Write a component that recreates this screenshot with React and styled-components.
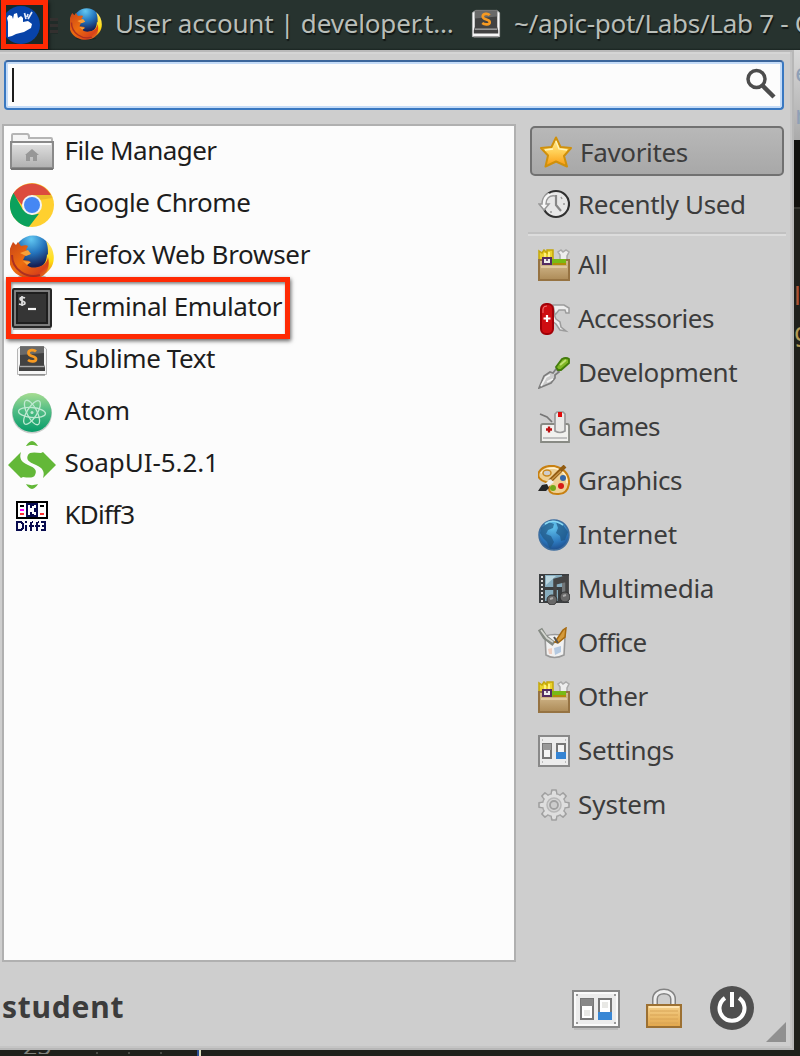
import React from "react";
import styled, { createGlobalStyle } from "styled-components";

const GlobalStyle = createGlobalStyle`
  * { box-sizing: border-box; }
  body { margin: 0; overflow: hidden; font-family: "Noto Sans", "Open Sans", sans-serif; font-size: 26px; }
  svg { display: block; flex: none; }
`;

const Desktop = styled.div`
  width: 800px;
  height: 1056px;
  overflow: hidden;
  display: flex;
  flex-direction: column;
  background: #1f201c;
`;

const Panel = styled.header`
  height: 50px;
  flex: none;
  display: flex;
  align-items: center;
  padding-bottom: 3px;
  background: linear-gradient(#27332f 0 48px, #1a2421 50px);
  color: #b9beb9;
  white-space: nowrap;
  overflow: hidden;
`;

const WhiskerButton = styled.div`
  width: 47px;
  height: 49px;
  margin-left: 1px;
  flex: none;
  align-self: flex-start;
  border: 5px solid #ff2a04;
  box-shadow: 1px 2px 4px rgba(0, 0, 0, 0.7);
  overflow: hidden;
`;

const Grip = styled.div`
  width: 8px;
  height: 16px;
  margin: 4px 12px 0 2px;
  flex: none;
  background: repeating-linear-gradient(#33302f 0 3px, #202b28 3px 6px);
`;

const TaskLabel = styled.span`
  width: ${(p) => p.$width}px;
  margin: 0 ${(p) => p.$after || 0}px 0 ${(p) => p.$before}px;
  padding-bottom: 2px;
  flex: none;
  letter-spacing: ${(p) => p.$track || 0}px;
  text-shadow: 1px 2px 1px rgba(0, 0, 0, 0.6);
`;

const Workspace = styled.div`
  height: 1000px;
  flex: none;
  display: flex;
`;

const Menu = styled.main`
  width: 794px;
  height: 1000px;
  flex: none;
  display: flex;
  flex-direction: column;
  background: #cecece;
  border-top: 2px solid #b9b9b9;
  border-right: 2px solid #b7b7b7;
  border-bottom: 2px solid #b7b7b7;
  box-shadow: inset -2px -2px #c5c5c5, inset 0 2px #d5d5d5;
`;

const SearchField = styled.div`
  width: 780px;
  height: 50px;
  margin: 8px 0 0 4px;
  padding: 0 6px 0 4px;
  flex: none;
  display: flex;
  align-items: center;
  justify-content: space-between;
  background: #fcfcfc;
  border: 2px solid #3978c1;
  border-top-color: #3b659b;
  border-radius: 4px;
  box-shadow: inset 0 0 0 2px #c5dcf8;

  svg { margin-bottom: 3px; }
`;

const Caret = styled.i`
  width: 2px;
  height: 34px;
  margin-left: 2px;
  background: #1c1c1c;
`;

const Columns = styled.div`
  height: 838px;
  margin-top: 14px;
  flex: none;
  display: flex;
`;

const AppList = styled.ul`
  list-style: none;
  margin: 0 0 0 2px;
  padding: 0;
  width: 514px;
  flex: none;
  background: #fcfcfc;
  border: 2px solid #b0b0b0;
`;

const AppRow = styled.li`
  height: 52px;
  display: flex;
  align-items: center;
  color: #1d1d1d;
`;

const IconSlot = styled.span`
  width: 48px;
  height: 48px;
  margin: 2px 8.5px 0 4px;
  flex: none;
  display: grid;
  place-items: center;
`;

const Label = styled.span`
  padding-bottom: ${(p) => p.$raise ?? 2}px;
  white-space: nowrap;
  letter-spacing: ${(p) => p.$track || 0}px;
`;

const Callout = styled.div`
  position: absolute;
  left: 6px;
  top: 277px;
  width: 284px;
  height: 62px;
  border: 5px solid #ff2a04;
  box-shadow: 1px 2px 4px rgba(0, 0, 0, 0.6), inset 1px 2px 3px rgba(0, 0, 0, 0.45);
`;

const Categories = styled.nav`
  width: 258px;
  margin-left: 12px;
  padding-top: 2px;
  color: #3c3c3c;
`;

const Category = styled.div`
  height: ${(p) => (p.$compact ? 53 : 54)}px;
  display: flex;
  align-items: center;
  padding: ${(p) => (p.$compact ? 2 : 0)}px 0 0 10px;
  gap: 8px;
`;

const Selected = styled(Category)`
  width: 254px;
  height: 50px;
  margin-left: 2px;
  background: linear-gradient(#b8b8b8, #a8a8a8);
  border: 2px solid #717171;
  border-radius: 5px;
  padding: 2px 0 0 8px;
`;

const Separator = styled.hr`
  margin: 3px 0 2px;
  border: 0;
  height: 4px;
  background: linear-gradient(#c1c1c1 50%, #dcdcdc 50%);
`;

const Footer = styled.footer`
  height: 84px;
  display: flex;
  align-items: flex-start;
  padding: 24px 6px 0 2px;
`;

const UserName = styled.strong`
  flex: 1;
  height: 42px;
  line-height: 42px;
  font-size: 30px;
  font-weight: 700;
  letter-spacing: 0.75px;
  color: #3c3c3c;
`;

const Behind = styled.aside`
  width: 6px;
  height: 1000px;
  display: flex;
  flex-direction: column;
  font-size: 26px;
  line-height: 30px;
  background: #1f201b;
`;

const BehindPage = styled.div`
  height: 90px;
  flex: none;
  overflow: hidden;
  padding: 1px 0 0 1px;
  line-height: 42px;
  color: #8fa0b6;
  background: linear-gradient(#d9d9d9, #aaa);
`;

const BehindTop = styled.div`
  height: 69px;
  flex: none;
  background: #11110d;
  border-bottom: 2px solid #35352f;
`;

const CodeSliver = styled.div`
  height: 36px;
  margin-top: ${(p) => p.$gap}px;
  flex: none;
  overflow: hidden;
  color: ${(p) => p.$tone};
`;

const Strip = styled.div`
  height: 6px;
  display: flex;
  align-items: flex-start;
  background: #1f201b;
`;

const LineNumber = styled.span`
  width: 30px;
  height: 4px;
  margin-left: 23px;
  overflow: hidden;
  font-size: 25px;
  color: #80827b;
  display: flex;
  align-items: flex-end;
  line-height: 18px;
`;

const Dot = styled.i`
  width: 2px;
  height: 2px;
  margin: 2px 0 0 ${(p) => p.$gap}px;
  background: #4a4b45;
`;

const CodeCursor = styled.i`
  width: 4px;
  height: 6px;
  margin-left: 35px;
  background: linear-gradient(90deg, #294b94 0 2px, #d9dbb9 2px);
`;

function Mouse() {
  return (
    <svg width="37" height="39" viewBox="6 5 37 39">
      <rect x="5" y="5" width="40" height="40" fill="#1b2926" />
      <circle cx="21" cy="25" r="19" fill="#0743a8" />
      <path d="M8 37V22l-1-4 2-3 3 1 1 3 1-5 3-1 1 5 3-2 2 2v4l5-1 4 3-1 4-7 4-8 2-4 2z" fill="#fff" />
      <path d="M24.500 13l1.500 6M32 12l-4 7M28 14l-1 3" stroke="#e4eafa" strokeWidth="1.700" />
    </svg>
  );
}

function Firefox({ size, id }) {
  return (
    <svg width={size} height={size} viewBox="0 0 44 44">
      <defs>
        <radialGradient id={id + "b"} cx=".45" cy=".1" r=".85">
          <stop offset="0" stopColor="#62c8f2" /><stop offset=".45" stopColor="#2474bd" /><stop offset=".85" stopColor="#172257" />
        </radialGradient>
        <linearGradient id={id + "o"} x1="0" y1="0" x2="1" y2="1">
          <stop offset="0" stopColor="#c84118" /><stop offset=".45" stopColor="#ed6d0f" /><stop offset=".8" stopColor="#d9421a" /><stop offset="1" stopColor="#ef9b20" />
        </linearGradient>
        <linearGradient id={id + "y"} x1="0" y1="0" x2="0" y2="1">
          <stop offset="0" stopColor="#ffe678" /><stop offset=".55" stopColor="#ffdd12" /><stop offset="1" stopColor="#e86817" />
        </linearGradient>
      </defs>
      <ellipse cx="22" cy="42" rx="14" ry="2" fill="#000" opacity=".25" />
      <circle cx="23" cy="19" r="18.5" fill={`url(#${id}b)`} />
      <path d="M36 6c9 7 10 21 4 28-9 12-29 11-35 1l18-2c9 1 14-5 14-14l1 1c0-6 0-9-2-14z" fill={`url(#${id}y)`} />
      <path d="M3 7l3 3 2-3 3 4c4-1 6-1 7 0l-2 4 3 3-4 3-2 4 7 1-3 4c3 3 7 3 11 2 5-1 9-4 10-10 2 8 0 14-4 18-9 7-26 4-32-6-5-9-4-18 1-27z" fill={`url(#${id}o)`} />
      <path d="M10 18l8-3 3 4-5 2zM13 26l8 1-4 3z" fill="#f7a039" />
      <path d="M2 20c0 15 15 24 28 20" fill="none" stroke="#ad3022" strokeWidth="2" />
    </svg>
  );
}

function Sublime({ size }) {
  return (
    <svg width={size} height={size} viewBox="0 0 32 32">
      <path d="M1.500 4v25.500h29V4l-3-2.500H5z" fill="#f6f6f6" stroke="#b5b5b5" strokeWidth="1" />
      <path d="M4 1.500h24V19l1 4v3H3v-3l1-4z" fill="#424242" />
      <path d="M4 1.500h24V8L4 10z" fill="#777" opacity=".75" />
      <path d="M4 21.500h24" stroke="#aaa" strokeWidth="1.400" />
      <path d="M20 6.500c-2-2-7.500-2-7.500 1.500 0 4 7.500 2.500 7.500 6 0 3-5.500 3-8 1" fill="none" stroke="#f79a22" strokeWidth="2.800" />
      <path d="M3 30h26" stroke="#777" strokeWidth="1.200" />
    </svg>
  );
}

function HomeFolder() {
  return (
    <svg width="44" height="44" viewBox="0 1 44 44">
      <defs><linearGradient id="folder" x2="0" y2="1"><stop stopColor="#e2e2e2" /><stop offset="1" stopColor="#b0b0b0" /></linearGradient></defs>
      <path d="M2 14V5q0-1 1-1h14q2 0 2 3v1h22q1 0 1 1v5" fill="#f5f5f5" stroke="#b5b5b5" strokeWidth="2" />
      <path d="M1 12h42v26H1z" fill="url(#folder)" stroke="#8a8a8a" strokeWidth="2" />
      <path d="M3 14h38" stroke="#fafafa" strokeWidth="2" />
      <path d="M1 39h42" stroke="#757575" strokeWidth="2" />
      <path d="M15 25l7-6 7 6h-2v6h-4v-4h-3v4h-4v-6z" fill="#979797" />
    </svg>
  );
}

function Chrome() {
  return (
    <svg width="44" height="44" viewBox="0 0 44 44">
      <circle cx="22" cy="22" r="22" fill="#ffd02f" />
      <path d="M3 11A22 22 0 0 1 41 12H22L12 22z" fill="#dc4b3e" />
      <path d="M3.500 10A22 22 0 0 0 19 43.800l10-13L22 32l-9-5z" fill="#0ba15d" />
      <path d="M22 12h19l1.500 3L29 17z" fill="#d7a62a" opacity=".5" />
      <circle cx="22" cy="22" r="10" fill="#f3f3f3" />
      <circle cx="22" cy="22" r="8" fill="#4587f3" />
    </svg>
  );
}

function Terminal() {
  return (
    <svg width="40" height="42" viewBox="0 0 40 42">
      <path d="M1 41h38" stroke="#aaa" strokeWidth="2" />
      <rect x="1" y="1" width="38" height="38" rx="1" fill="#555" stroke="#272727" strokeWidth="2" />
      <rect x="3" y="3" width="34" height="34" fill="none" stroke="#8a8a8a" strokeWidth="1.500" />
      <rect x="5" y="5" width="30" height="30" fill="#353535" stroke="#1e1e1e" strokeWidth="2" />
      <path d="M13 10c-2-1-5-1-5 1s5 2 5 4-3 2-6 1M10 8v10" fill="none" stroke="#ddd" strokeWidth="1.800" />
      <path d="M16 21h8" stroke="#f5f5f5" strokeWidth="2.200" />
    </svg>
  );
}

function Atom() {
  return (
    <svg width="42" height="42" viewBox="0 0 42 42">
      <defs><linearGradient id="atom" x2="0" y2="1"><stop stopColor="#a6dc91" /><stop offset=".45" stopColor="#51bd85" /><stop offset="1" stopColor="#079c68" /></linearGradient></defs>
      <circle cx="21" cy="21.500" r="20" fill="#c9cdca" />
      <circle cx="21" cy="20.500" r="19.500" fill="url(#atom)" />
      <g fill="none" stroke="#bfe9d2" strokeWidth="1.300">
        <ellipse cx="21" cy="20.500" rx="13.500" ry="5" transform="rotate(5 21 20.500)" />
        <ellipse cx="21" cy="20.500" rx="13.500" ry="5" transform="rotate(63 21 20.500)" />
        <ellipse cx="21" cy="20.500" rx="13.500" ry="5" transform="rotate(122 21 20.500)" />
      </g>
      <circle cx="21" cy="20.500" r="1.500" fill="#bfe9d2" />
    </svg>
  );
}

function SoapUI() {
  return (
    <svg width="48" height="48" viewBox="0 0 48 48">
      <g fill="#63b838">
        <path d="M18 5c1-2 4-5 6-5s5 3 6 5c-5-1.500-7-1.500-12 0zM18 43c5 1.500 7 1.500 12 0-1 2-4 5-6 5s-5-3-6-5z" />
        <path d="M0 24L13 11c-2 6 0 10 7 13 8 3 9 6 7 10-1 3-6 3-12 2l-2 1z" />
        <path d="M48 24L35 37c2-6 0-10-7-13-8-3-10-6-8-10 1-3 6-3 13-2l2-1z" />
      </g>
    </svg>
  );
}

function KDiff() {
  return (
    <svg width="32" height="32" viewBox="0 0 32 32" shapeRendering="crispEdges">
      <path d="M0 0h32v18H0z" fill="#000" />
      <path d="M2 2h8v14H2zM22 2h8v14h-8z" fill="#fff" />
      <path d="M10 2h12v14H10z" fill="#080b4e" />
      <path d="M13 4v10M19 4v2h-2v2h-2v2h2v2h2v2" fill="none" stroke="#fff" strokeWidth="2" />
      <path d="M4 5h4M24 5h4" stroke="#000" strokeWidth="2" />
      <path d="M4 9h4" stroke="#f0f" strokeWidth="2" />
      <path d="M4 13h4M24 13h4" stroke="#f33" strokeWidth="2" />
      <path d="M1 20v10M1 21h4l2 2v4l-2 2H1M10 20v2M10 24v6M15 30v-8l2-1M13 25h5M21 30v-8l2-1M19 25h5M25 21h4v8h-4M26 25h4" fill="none" stroke="#080b4e" strokeWidth="1.800" />
    </svg>
  );
}

const Small = ({ children }) => <svg width="32" height="32" viewBox="0 0 32 32">{children}</svg>;

function Star() {
  return (
    <Small>
      <defs><linearGradient id="star" x2="0" y2="1"><stop stopColor="#fff0a0" /><stop offset=".5" stopColor="#ffcf55" /><stop offset="1" stopColor="#fa9a0f" /></linearGradient></defs>
      <path d="M16 1.500l4.500 9.500 10.500 1-7 8 3 10.500-11-5-10.500 5 2.500-11L1 12l10.500-1z" fill="url(#star)" stroke="#d0900b" strokeWidth="2" strokeLinejoin="round" />
      <path d="M16 5l3 8 8 1M5 14l8-1" fill="none" stroke="#fff5bc" strokeWidth="1.300" />
    </Small>
  );
}

function Recent() {
  return (
    <Small>
      <circle cx="18" cy="16" r="13" fill="#e7e7e7" stroke="#303030" strokeWidth="2.200" />
      <path d="M18 7v10l5 6" fill="none" stroke="#888" strokeWidth="2.200" />
      <path d="M17 8c-6-1-9 3-9 8h3l-5 6-5-6h3c0-4 2-9 6-11" fill="#f8f8f8" stroke="#999" strokeWidth="1.500" />
      <path d="M23 9l1 2M27 16h-2M13 25v-2" stroke="#999" strokeWidth="1.500" />
    </Small>
  );
}

function Box({ id }) {
  return (
    <Small>
      <defs><linearGradient id={id} x2="0" y2="1"><stop stopColor="#d7be94" /><stop offset="1" stopColor="#ad8b57" /></linearGradient></defs>
      <path d="M1 11V2l3 2 2-3 3 3V1h6v10z" fill="#ead22e" stroke="#c4a70a" strokeWidth="1.500" />
      <path d="M7 4v6M11 3v7" stroke="#fff17a" strokeWidth="2" />
      <path d="M22 10V6l-2-3 3-2 2 2 3-2 3 2-2 4v4" fill="#eee" stroke="#aaa" strokeWidth="1.500" />
      <path d="M1 11h30v20H1z" fill={`url(#${id})`} stroke="#967342" strokeWidth="2" />
      <path d="M14 10h14v6H14z" fill="#78ba16" /><path d="M15 15h13" stroke="#b08e08" strokeWidth="2" />
      <path d="M5 9h8v6H5z" fill="#eee" stroke="#542c61" strokeWidth="2" /><path d="M9 9v3" stroke="#542c61" strokeWidth="1.500" />
      <path d="M3 18h26" stroke="#e7d2aa" strokeWidth="1.500" />
    </Small>
  );
}

function Knife() {
  return (
    <Small>
      <path d="M15 2h11l5 3v5h-3l-1-3h-6l-4 5zM15 9l3 7 4 3 1 5 5 4-6-1-4-6-4-3z" fill="#eee" stroke="#9c9c9c" strokeWidth="1.500" />
      <rect x="3" y="1" width="12" height="30" rx="5" fill="#cf0d12" stroke="#a00007" strokeWidth="2" />
      <path d="M5 10V6q0-3 4-3" stroke="#e77" fill="none" />
      <path d="M9 12v7M5.500 15.500h7" stroke="#fff" strokeWidth="2.200" />
    </Small>
  );
}

function Trowel() {
  return (
    <Small>
      <path d="M1 31l5-12 6-4 3 1 3-4 3 3-4 3v3l-4 5z" fill="#ccc" stroke="#7d7d7d" strokeWidth="1.700" />
      <path d="M3 29l5-9 4-2M9 25l6-3" fill="none" stroke="#f2f2f2" strokeWidth="1.600" />
      <path d="M18 10l6-8q4-2 7 0v4l-8 7h-3z" fill="#82b827" stroke="#437c0b" strokeWidth="1.800" />
      <path d="M22 8l6-5" stroke="#bfe072" strokeWidth="2" />
    </Small>
  );
}

function Joystick() {
  return (
    <Small>
      <path d="M2 3l7 3 5 5" fill="none" stroke="#777" strokeWidth="1.700" />
      <path d="M3 15q0-2 2-2h24q2 0 2 2v16H3z" fill="#f1f1ee" stroke="#888a84" strokeWidth="1.800" />
      <path d="M5 27h24" stroke="#bbb" strokeWidth="1.800" />
      <path d="M17 20V3l2-2h6l2 2v17q-5 3-10 0z" fill="#e9e9e7" stroke="#999" strokeWidth="1.700" />
      <path d="M20 1h4v5h-4z" fill="#e00b0b" /><path d="M11 15.500v6M8 18.500h6" stroke="#bc1111" strokeWidth="2.300" />
    </Small>
  );
}

function Palette() {
  return (
    <Small>
      <path d="M1 7q4-7 15-6 16 4 15 18-2 11-12 10-9 0-8-7 1-5-3-5-10-3-7-10z" fill="#eed094" stroke="#c88011" strokeWidth="2" />
      <path d="M3 8q4-5 13-5 13 3 13 15" fill="none" stroke="#fff0cc" strokeWidth="1.500" />
      <ellipse cx="9" cy="8" rx="4" ry="3" fill="#cecece" stroke="#ca891e" strokeWidth="1.500" />
      <path d="M27 1L12 16" stroke="#925c12" strokeWidth="4" /><path d="M23 6l-12 11" stroke="#c99545" strokeWidth="1.500" />
      <path d="M12 14l-5 5 3 3 6-5z" fill="#eee" /><path d="M0 26l4-6 5-1 2 4-3 3z" fill="#262626" />
      <circle cx="25" cy="13" r="3" fill="#3668a8" /><circle cx="15" cy="23" r="3" fill="#74a919" /><circle cx="23" cy="21" r="3" fill="#d81b17" />
    </Small>
  );
}

function Globe() {
  return (
    <Small>
      <defs><radialGradient id="globe" cx=".45" cy=".2" r=".9"><stop stopColor="#65c8f0" /><stop offset=".6" stopColor="#2c78bd" /><stop offset="1" stopColor="#19407d" /></radialGradient></defs>
      <circle cx="16" cy="16" r="15" fill="url(#globe)" stroke="#3c6d9f" strokeWidth="1.500" />
      <path d="M3 9l8-6 5 2-1 4-5 2-2 4 5 2 3 6-4 7-3-7-4-4-3-5zM18 3l7 3 5 7-3 8-4 1-1-5-4-3 2-5z" fill="#205784" opacity=".7" />
      <path d="M7 5q8-6 18 1" fill="none" stroke="#8ad9f3" strokeWidth="1.600" />
    </Small>
  );
}

function Multimedia() {
  return (
    <Small>
      <path d="M1 1h30v29H1z" fill="#3b3e40" /><path d="M24 3h7v26h-7z" fill="#727678" /><path d="M7 2h17v12H7zM7 17h13v11H7z" fill="#87adbf" />
      <path d="M8 3h10L8 12z" fill="#bbd6df" /><path d="M3 4h2M3 8h2M3 12h2M3 16h2M3 20h2M3 24h2M3 28h2" stroke="#ddd" strokeWidth="2" />
      <path d="M17 26V7l12-3v20M17 10l12-3" fill="none" stroke="#444" strokeWidth="3.500" />
      <circle cx="14" cy="27" r="5" fill="#686868" stroke="#333" /><circle cx="27" cy="24" r="5" fill="#686868" stroke="#333" />
      <path d="M12 26l3-1M25 23l3-1" stroke="#aaa" strokeWidth="2" />
    </Small>
  );
}

function Office() {
  return (
    <Small>
      <path d="M7 9l1 19q8 5 18 0l1-19q-10-3-20 0z" fill="#f1f1f1" stroke="#999" strokeWidth="1.600" />
      <path d="M2 2l5 8 9 7" fill="none" stroke="#858a83" strokeWidth="5" /><path d="M3 3l6 8 6 4" fill="none" stroke="#d4d6d0" strokeWidth="1.700" />
      <path d="M17 15l8-12 3-2-1 9-7 6z" fill="#d49a3b" stroke="#a76a10" strokeWidth="1.500" />
      <path d="M16 10l4 6" stroke="#555" strokeWidth="2" /><path d="M10 22l4-1v6h-3z" fill="#efcfc1" /><path d="M16 21l7-2v6l-6 3z" fill="#b4c9e1" />
    </Small>
  );
}

function Settings() {
  return (
    <Small>
      <path d="M1 1h30v30H1z" fill="#ececec" stroke="#898989" strokeWidth="2" />
      <path d="M5 9h8v14H5z" fill="#f5f5f5" stroke="#777" strokeWidth="2" /><path d="M5 9h8v6H5z" fill="#999" />
      <path d="M19 9h8v14h-8z" fill="#f5f5f5" stroke="#777" strokeWidth="2" /><path d="M18 17h10v7H18z" fill="#3584d3" />
      <path d="M4 5h1M27 5h1M4 27h1M27 27h1" stroke="#aaa" strokeWidth="1.500" />
    </Small>
  );
}

function Gear() {
  const teeth = [0, 45, 90, 135, 180, 225, 270, 315];
  return (
    <Small>
      {teeth.map((angle) => (
        <path key={angle} d="M13 7l.8-6h4.400l.8 6" fill="#dedede" stroke="#a0a0a0" strokeWidth="1.600" strokeLinejoin="round" transform={`rotate(${angle} 16 16)`} />
      ))}
      <circle cx="16" cy="16" r="11.500" fill="#dedede" stroke="#a8a8a8" strokeWidth="1.400" />
      {teeth.map((angle) => (
        <path key={angle} d="M14 3h4v5h-4z" fill="#dedede" transform={`rotate(${angle} 16 16)`} />
      ))}
      <circle cx="16" cy="16" r="7" fill="#d4d4d4" stroke="#b8b8b8" strokeWidth="1.500" />
      <circle cx="16" cy="16" r="4" fill="#ccc" stroke="#a0a0a0" strokeWidth="1.800" />
    </Small>
  );
}

const apps = [
  ["File Manager", HomeFolder, -0.55],
  ["Google Chrome", Chrome, -0.47],
  ["Firefox Web Browser", () => <Firefox size={44} id="ffx" />, -0.31],
  ["Terminal Emulator", Terminal, -0.45],
  ["Sublime Text", () => <Sublime size={32} />, -0.4],
  ["Atom", Atom, -0.2],
  ["SoapUI-5.2.1", SoapUI, -0.08],
  ["KDiff3", KDiff, -0.8],
];

const categories = [
  ["All", () => <Box id="boxAll" />, -0.2],
  ["Accessories", Knife, -0.5],
  ["Development", Trowel, -0.42],
  ["Games", Joystick, -0.6],
  ["Graphics", Palette, -0.42],
  ["Internet", Globe, -0.1],
  ["Multimedia", Multimedia, -0.25],
  ["Office", Office, -0.6],
  ["Other", () => <Box id="boxOther" />, -0.2],
  ["Settings", Settings, -0.38],
  ["System", Gear, 0],
];

const FooterActions = styled.div`
  height: 60px;
  display: flex;
  align-items: flex-start;

  svg:nth-child(1) { margin: 4px 26px 0 0; }
  svg:nth-child(2) { margin: 2px 28px 0 0; }
  svg:nth-child(3) { margin: 0 12px 0 0; }
  svg:nth-child(4) { margin: 36px 0 0 0; }
`;

export default function App() {
  return (
    <Desktop>
      <GlobalStyle />
      <Panel>
        <WhiskerButton><Mouse /></WhiskerButton>
        <Grip />
        <Firefox size={32} id="task" />
        <TaskLabel $before={13} $width={340} $after={16} $track={-0.16}>User account | developer.t...</TaskLabel>
        <Sublime size={30} />
        <TaskLabel $before={13} $width={300} $track={-0.28}>~/apic-pot/Labs/Lab 7 - C</TaskLabel>
      </Panel>
      <Workspace>
        <Menu>
          <SearchField>
            <Caret />
            <svg width="30" height="32" viewBox="0 0 30 32">
              <circle cx="10.500" cy="11" r="8.500" fill="none" stroke="#4c4c4c" strokeWidth="3.500" />
              <path d="M16 17l12 12" stroke="#4c4c4c" strokeWidth="4.500" />
            </svg>
          </SearchField>
          <Columns>
            <AppList>
              {apps.map(([name, Icon, track]) => (
                <AppRow key={name}><IconSlot><Icon /></IconSlot><Label $raise={4} $track={track}>{name}</Label></AppRow>
              ))}
            </AppList>
            <Categories>
              <Selected><Star /><Label $raise={0} $track={-0.33}>Favorites</Label></Selected>
              <Category $compact><Recent /><Label $raise={0} $track={-0.35}>Recently Used</Label></Category>
              <Separator />
              {categories.map(([name, Icon, track]) => (
                <Category key={name}><Icon /><Label $track={track}>{name}</Label></Category>
              ))}
            </Categories>
          </Columns>
          <Footer>
            <UserName>student</UserName>
            <FooterActions>
              <svg width="48" height="40" viewBox="0 0 48 40">
                <rect x="1" y="1" width="46" height="36" fill="#ececec" stroke="#878787" strokeWidth="2" />
                <path d="M3 3h42v32H3z" fill="none" stroke="#fafafa" strokeWidth="2" />
                <path d="M9 9h12v20H9zM27 9h12v20H27z" fill="#fff" stroke="#777" strokeWidth="2" />
                <path d="M9 9h12v7H9z" fill="#888" /><path d="M26 22h14v8H26z" fill="#3987d5" />
                <path d="M12 20h6v6h-6zM30 12h6v6h-6z" fill="#e8e8e5" />
                <path d="M4 5h2M42 5h2M4 33h2M42 33h2" stroke="#999" strokeWidth="2" />
                <path d="M2 39h44" stroke="#bbb" strokeWidth="2" />
              </svg>
              <svg width="36" height="44" viewBox="0 0 36 44">
                <defs><linearGradient id="lock" x2="0" y2="1"><stop stopColor="#f5d18c" /><stop offset="1" stopColor="#e2a64a" /></linearGradient></defs>
                <path d="M9 17v-6c0-10 18-10 18 0v6" fill="none" stroke="#838383" strokeWidth="6" />
                <path d="M9 17v-6c0-10 18-10 18 0v6" fill="none" stroke="#eee" strokeWidth="3" />
                <path d="M1 17h34v22H1z" fill="url(#lock)" stroke="#9c7032" strokeWidth="2" />
                <path d="M3 19h30" stroke="#ffe4b0" strokeWidth="2" />
                <path d="M4 23h28M4 27h28M4 31h28M4 35h28" stroke="#d8a457" strokeWidth="1" />
              </svg>
              <svg width="44" height="46" viewBox="0 0 44 46">
                <circle cx="22" cy="22" r="22" fill="#505050" />
                <path d="M15 12a12.500 12.500 0 1 0 14 0" fill="none" stroke="#fff" strokeWidth="4" />
                <path d="M22 6v15" stroke="#fff" strokeWidth="4" />
              </svg>
              <svg width="20" height="20" viewBox="0 0 20 20"><path d="M20 0v20H0z" fill="#909090" /></svg>
            </FooterActions>
          </Footer>
        </Menu>
        <Behind>
          <BehindPage>e<br />r</BehindPage>
          <BehindTop />
          <CodeSliver $gap={71} $tone="#ad5434">l</CodeSliver>
          <CodeSliver $gap={0} $tone="#b39a55">g</CodeSliver>
        </Behind>
      </Workspace>
      <Strip>
        <LineNumber>25</LineNumber>
        <Dot $gap={43} /><Dot $gap={30} /><Dot $gap={30} />
        <CodeCursor />
      </Strip>
      <Callout />
    </Desktop>
  );
}
